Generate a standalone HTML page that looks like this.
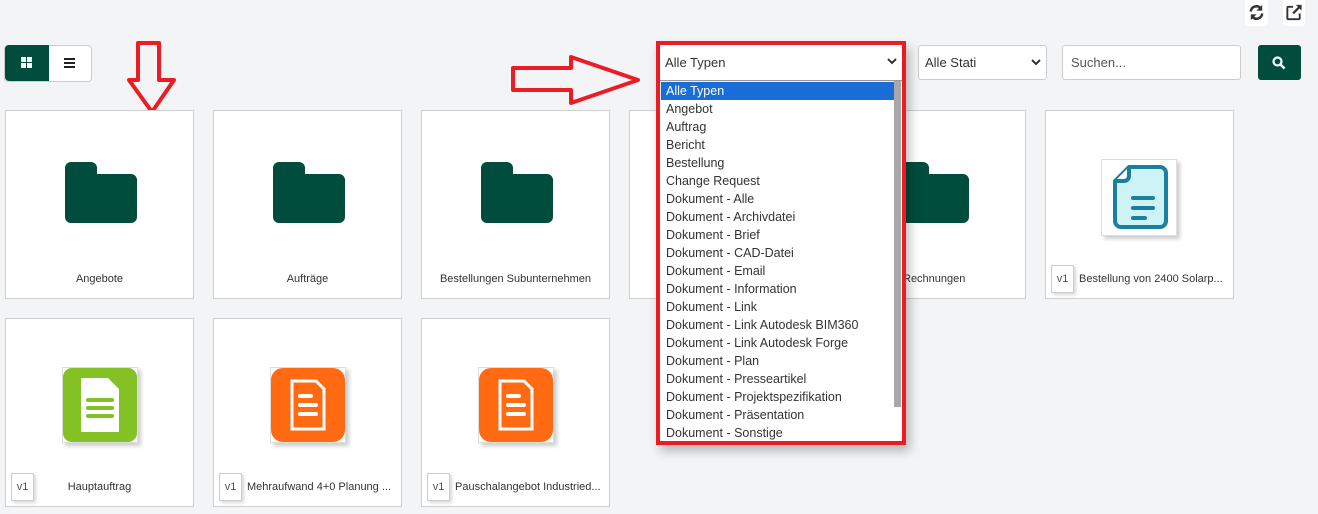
<!DOCTYPE html>
<html><head><meta charset="utf-8"><style>
*{box-sizing:border-box;margin:0;padding:0}
body{width:1318px;height:514px;background:#f3f4f6;font-family:"Liberation Sans",sans-serif;position:relative;overflow:hidden;color:#333}
.a{position:absolute}
.card{position:absolute;width:189px;height:189px;background:#fff;border:1px solid #cfcfcf}
.card .lbl{position:absolute;left:0;right:0;top:162px;text-align:center;font-size:11px;color:#333}
.v1{position:absolute;left:5px;top:154px;width:23px;height:28px;border:1px solid #ccc;background:#fff;font-size:11px;color:#555;text-align:center;line-height:26px;box-shadow:2px 2px 3px rgba(0,0,0,.15)}
.folder{position:absolute;left:59px;top:51px}
.dd div{height:18px;line-height:18px;padding-left:5px;font-size:12.5px;color:#333;white-space:nowrap}
</style></head><body>
<div class="a" style="left:1245px;top:0;width:23px;height:26px;background:#fff;border-radius:0 0 3px 3px"></div>
<svg class="a" style="left:1247px;top:3px" width="19" height="19" viewBox="0 0 20 20"><path d="M4 9a6 6 0 0 1 10.5-3.5" fill="none" stroke="#333" stroke-width="2.6"/><path d="M16 2v6h-6z" fill="#333"/><path d="M16 11a6 6 0 0 1-10.5 3.5" fill="none" stroke="#333" stroke-width="2.6"/><path d="M4 18v-6h6z" fill="#333"/></svg>
<div class="a" style="left:1283px;top:0;width:22px;height:26px;background:#fff;border-radius:0 0 3px 3px"></div>
<svg class="a" style="left:1284px;top:3px" width="20" height="19" viewBox="0 0 20 20"><path d="M9 4H4a1 1 0 0 0-1 1v11a1 1 0 0 0 1 1h11a1 1 0 0 0 1-1v-5" fill="none" stroke="#333" stroke-width="2"/><path d="M9 11L17 3" stroke="#333" stroke-width="2.4"/><path d="M12 2h6v6z" fill="#333"/></svg>
<div class="a" style="left:4px;top:45px;width:88px;height:37px;border:1px solid #ccc;border-radius:4px;background:#fff"></div>
<div class="a" style="left:5px;top:45px;width:44px;height:36px;background:#004d3d;border-radius:4px 0 0 4px"></div>
<svg class="a" style="left:21px;top:57px" width="11" height="11"><rect x="0" y="0" width="5" height="5" fill="#fff"/><rect x="6" y="0" width="5" height="5" fill="#fff"/><rect x="0" y="6" width="5" height="5" fill="#fff"/><rect x="6" y="6" width="5" height="5" fill="#fff"/></svg>
<svg class="a" style="left:64px;top:58px" width="11" height="10"><rect y="0" width="11" height="2" fill="#222"/><rect y="4" width="11" height="2" fill="#222"/><rect y="8" width="11" height="2" fill="#222"/></svg>
<!-- arrows -->
<svg class="a" style="left:0;top:0" width="700" height="130"><path d="M138 43h21v37h15L152 112 129 80h9z" fill="none" stroke="#ec1c24" stroke-width="4" stroke-linejoin="round"/><path d="M513 68h58V57l67 23-67 23V90h-58z" fill="none" stroke="#ec1c24" stroke-width="4" stroke-linejoin="round"/></svg>
<div class="a" style="left:918px;top:45px;width:129px;height:35px;background:#fff;border:1px solid #ccc;border-radius:3px;font-size:13px;line-height:33px;padding-left:6px">Alle Stati</div>
<svg class="a" style="left:1031px;top:59px" width="10" height="7"><path d="M1 1l4 4 4-4" fill="none" stroke="#333" stroke-width="2"/></svg>
<div class="a" style="left:1062px;top:45px;width:179px;height:35px;background:#fff;border:1px solid #ccc;border-radius:3px;font-size:13px;line-height:33px;padding-left:8px;color:#555">Suchen...</div>
<div class="a" style="left:1258px;top:45px;width:43px;height:35px;background:#004d3d;border-radius:3px"></div>
<svg class="a" style="left:1272px;top:56px" width="14" height="14"><circle cx="5.5" cy="5.5" r="4" fill="none" stroke="#fff" stroke-width="2.2"/><path d="M8.5 8.5l4 4" stroke="#fff" stroke-width="2.6"/></svg>
<div class="card" style="left:5px;top:110px"><svg class="folder" width="72" height="62"><path d="M6 0h20a6 6 0 0 1 6 6v6h34a6 6 0 0 1 6 6v37a6 6 0 0 1-6 6H6a6 6 0 0 1-6-6V6a6 6 0 0 1 6-6z" fill="#004d3d"/></svg><div class="lbl">Angebote</div></div>
<div class="card" style="left:213px;top:110px"><svg class="folder" width="72" height="62"><path d="M6 0h20a6 6 0 0 1 6 6v6h34a6 6 0 0 1 6 6v37a6 6 0 0 1-6 6H6a6 6 0 0 1-6-6V6a6 6 0 0 1 6-6z" fill="#004d3d"/></svg><div class="lbl">Aufträge</div></div>
<div class="card" style="left:421px;top:110px"><svg class="folder" width="72" height="62"><path d="M6 0h20a6 6 0 0 1 6 6v6h34a6 6 0 0 1 6 6v37a6 6 0 0 1-6 6H6a6 6 0 0 1-6-6V6a6 6 0 0 1 6-6z" fill="#004d3d"/></svg><div class="lbl">Bestellungen Subunternehmen</div></div>
<div class="card" style="left:629px;top:110px"></div>
<div class="card" style="left:837px;top:110px"><svg class="folder" width="72" height="62"><path d="M6 0h20a6 6 0 0 1 6 6v6h34a6 6 0 0 1 6 6v37a6 6 0 0 1-6 6H6a6 6 0 0 1-6-6V6a6 6 0 0 1 6-6z" fill="#004d3d"/></svg><div class="lbl" style="text-align:left;left:65px">Rechnungen</div></div>
<div class="card" style="left:1045px;top:110px">
<div class="a" style="left:55px;top:48px;width:76px;height:77px;background:#fff;border:1px solid #ddd;box-shadow:3px 3px 4px rgba(0,0,0,.2)"></div>
<svg class="a" style="left:65px;top:53px" width="58" height="66" viewBox="0 0 58 66"><path d="M18 3h31a6 6 0 0 1 6 6v48a6 6 0 0 1-6 6H10a6 6 0 0 1-6-6V17z" fill="#cdf3f7" stroke="#1b7fa0" stroke-width="4" stroke-linejoin="round"/><path d="M18 3v9a5 5 0 0 1-5 5H4" fill="#fff" stroke="#1b7fa0" stroke-width="4"/><path d="M22 34h20M22 44h20M22 54h12" stroke="#1b7fa0" stroke-width="4" stroke-linecap="round"/></svg>
<div class="v1">v1</div><div class="a" style="left:33px;top:162px;font-size:11px">Bestellung von 2400 Solarp...</div></div>
<div class="card" style="left:5px;top:318px">
<div class="a" style="left:56px;top:48px;width:76px;height:76px;border:1px solid #ddd;background:#fff;box-shadow:3px 3px 4px rgba(0,0,0,.2)"></div>
<div class="a" style="left:57px;top:49px;width:74px;height:74px;background:#84c125;border-radius:9px"></div>
<svg class="a" style="left:75px;top:59px" width="38" height="54"><path d="M0 0h27l11 11v43H0z" fill="#fff"/><path d="M7 22h24M7 30h24M7 38h24" stroke="#84c125" stroke-width="4" stroke-linecap="round"/></svg>
<div class="v1">v1</div><div class="lbl">Hauptauftrag</div></div>
<div class="card" style="left:213px;top:318px">
<div class="a" style="left:56px;top:48px;width:76px;height:76px;border:1px solid #ddd;background:#fff;box-shadow:3px 3px 4px rgba(0,0,0,.2)"></div>
<div class="a" style="left:57px;top:49px;width:74px;height:74px;background:#ff6a13;border-radius:12px"></div>
<svg class="a" style="left:76px;top:60px" width="36" height="52"><path d="M2 2h24l8 8v40H2z" fill="none" stroke="#fff" stroke-width="3"/><path d="M10 17h11M10 26h16M10 35h16" stroke="#fff" stroke-width="4" stroke-linecap="round"/></svg>
<div class="v1">v1</div><div class="a" style="left:33px;top:162px;font-size:11px">Mehraufwand 4+0 Planung ...</div></div>
<div class="card" style="left:421px;top:318px">
<div class="a" style="left:56px;top:48px;width:76px;height:76px;border:1px solid #ddd;background:#fff;box-shadow:3px 3px 4px rgba(0,0,0,.2)"></div>
<div class="a" style="left:57px;top:49px;width:74px;height:74px;background:#ff6a13;border-radius:12px"></div>
<svg class="a" style="left:76px;top:60px" width="36" height="52"><path d="M2 2h24l8 8v40H2z" fill="none" stroke="#fff" stroke-width="3"/><path d="M10 17h11M10 26h16M10 35h16" stroke="#fff" stroke-width="4" stroke-linecap="round"/></svg>
<div class="v1">v1</div><div class="a" style="left:33px;top:162px;font-size:11px">Pauschalangebot Industried...</div></div>
<div class="a" style="left:656px;top:41px;width:250px;height:404px;border:4px solid #ec1c24;background:#fff;box-shadow:4px 6px 10px rgba(0,0,0,.25)"></div>
<div class="a" style="left:660px;top:45px;width:242px;height:35px;background:#fff;font-size:13px;line-height:36px;padding-left:5px;box-shadow:0 2px 3px rgba(0,0,0,.1)">Alle Typen</div>
<svg class="a" style="left:887px;top:58px" width="10" height="7"><path d="M1 1l4 4 4-4" fill="none" stroke="#333" stroke-width="2"/></svg>
<div class="a" style="left:660px;top:80px;width:242px;height:1px;background:#999"></div>
<div class="a" style="left:894px;top:81px;width:7px;height:326px;background:#a8a8a8"></div>
<div class="a dd" style="left:661px;top:81px;width:233px;height:359px;overflow:hidden;padding-top:1px">
<div style="background:#1a6dd6;color:#fff">Alle Typen</div>
<div>Angebot</div><div>Auftrag</div><div>Bericht</div><div>Bestellung</div><div>Change Request</div>
<div>Dokument - Alle</div><div>Dokument - Archivdatei</div><div>Dokument - Brief</div><div>Dokument - CAD-Datei</div>
<div>Dokument - Email</div><div>Dokument - Information</div><div>Dokument - Link</div><div>Dokument - Link Autodesk BIM360</div>
<div>Dokument - Link Autodesk Forge</div><div>Dokument - Plan</div><div>Dokument - Presseartikel</div><div>Dokument - Projektspezifikation</div>
<div>Dokument - Präsentation</div><div>Dokument - Sonstige</div></div>
</body></html>
